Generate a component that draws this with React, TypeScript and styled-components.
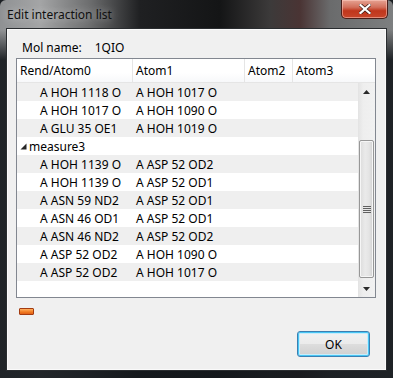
import React from "react";
import styled, { createGlobalStyle } from "styled-components";

const Global = createGlobalStyle`
  html, body { margin: 0; padding: 0; }
  body { width: 393px; height: 378px; overflow: hidden; background: #1b1f23; }
`;

const FONT = `"Segoe UI", "Noto Sans", "Open Sans", sans-serif`;

const Frame = styled.div`
  width: 393px;
  height: 378px;
  box-sizing: border-box;
  display: flex;
  flex-direction: column;
  padding: 0 6px 7px 6px;
  background:
    linear-gradient(180deg, rgba(0,0,0,0) 0px, rgba(0,0,0,0) 30px, rgba(20,24,28,0.9) 60px),
    linear-gradient(90deg, #8f9193 0px, #a4a5a6 40px, #6c6d6e 90px, #1f2022 140px, #141516 220px, #3c3a3a 270px, #4a3434 300px, #6a6b6c 330px, #7d7f80 393px);
  border-radius: 6px 6px 0 0;
`;

const TitleBar = styled.div`
  height: 28px;
  display: flex;
  align-items: flex-start;
  justify-content: space-between;
`;

const Title = styled.div`
  font-family: ${FONT};
  font-size: 12px;
  color: #101010;
  padding: 6px 0 0 1px;
  text-shadow: 0 0 8px rgba(255,255,255,0.6);
`;

const CloseButton = styled.div`
  width: 47px;
  height: 19px;
  margin-right: -1px;
  box-sizing: border-box;
  border: 1px solid #4b1f1a;
  border-top: none;
  border-radius: 0 0 5px 5px;
  background: linear-gradient(180deg, #e6a393 0%, #d2705c 40%, #c0361c 60%, #c8452a 100%);
  box-shadow: inset 0 0 0 1px rgba(255,210,200,0.5);
  display: flex;
  align-items: center;
  justify-content: center;
`;

const Client = styled.div`
  flex: 1;
  box-sizing: border-box;
  border: 1px solid #2a2d30;
  box-shadow: inset 0 0 0 1px #fafafa;
  background: #f0f0f0;
  display: flex;
  flex-direction: column;
  padding: 8px 9px 0 9px;
  font-family: ${FONT};
  font-size: 12px;
  color: #000;
`;

const MolRow = styled.div`
  display: flex;
  gap: 13px;
  height: 20px;
  align-items: center;
  padding-left: 6px;
`;

const ListBox = styled.div`
  margin-top: 1px;
  width: 360px;
  height: 240px;
  box-sizing: border-box;
  border: 1px solid #828790;
  background: #fff;
  display: flex;
  flex-direction: column;
`;

const COLS = "116px 112px 48px 1fr";

const Header = styled.div`
  height: 24px;
  box-sizing: border-box;
  display: grid;
  grid-template-columns: ${COLS};
  border-bottom: 1px solid #e5e5e5;
  background: linear-gradient(180deg, #ffffff 0%, #ffffff 60%, #f7f8fa 100%);
`;

const HeadCell = styled.div<{ $last?: boolean }>`
  display: flex;
  align-items: center;
  padding-left: 3px;
  border-right: ${(p) => (p.$last ? "none" : "1px solid #e5e5e5")};
  color: #000;
`;

const Body = styled.div`
  flex: 1;
  display: flex;
  min-height: 0;
`;

const Rows = styled.div`
  flex: 1;
  display: flex;
  flex-direction: column;
`;

const Row = styled.div<{ $alt: boolean }>`
  height: 18px;
  display: grid;
  grid-template-columns: ${COLS};
  align-items: center;
  background: ${(p) => (p.$alt ? "#efefef" : "#ffffff")};
`;

const Cell = styled.div<{ $indent?: number }>`
  padding-left: ${(p) => p.$indent ?? 3}px;
  white-space: nowrap;
`;

const GroupCell = styled.div`
  grid-column: 1 / span 4;
  display: flex;
  align-items: center;
  padding-left: 3px;
  gap: 2px;
`;

const ScrollBar = styled.div`
  width: 17px;
  display: flex;
  flex-direction: column;
  background: linear-gradient(90deg, #e3e3e3 0%, #eeeeee 30%, #f1f1f1 100%);
`;

const ArrowBtn = styled.div`
  height: 17px;
  display: flex;
  align-items: center;
  justify-content: center;
`;

const Track = styled.div`
  flex: 1;
  display: flex;
  flex-direction: column;
  justify-content: flex-end;
`;

const Thumb = styled.div`
  height: 138px;
  margin: 0 1px 2px 1px;
  box-sizing: border-box;
  border: 1px solid #979797;
  border-radius: 2px;
  background: linear-gradient(90deg, #dcdcdc 0%, #eaeaea 40%, #e4e4e4 70%, #d0d0d0 100%);
  box-shadow: inset 0 0 0 1px #f6f6f6;
  display: flex;
  align-items: center;
  justify-content: center;
`;

const Footer = styled.div`
  display: flex;
  flex-direction: column;
  flex: 1;
`;

const OrangeBar = styled.div`
  width: 13px;
  height: 5px;
  margin: 10px 0 0 3px;
  border: 1px solid #a33b10;
  border-radius: 1px;
  background: linear-gradient(180deg, #ffb060 0%, #f07a20 60%, #e0601a 100%);
`;

const ButtonRow = styled.div`
  display: flex;
  justify-content: flex-end;
  padding: 16px 7px 0 0;
`;

const OkButton = styled.div`
  width: 73px;
  height: 26px;
  box-sizing: border-box;
  border: 1px solid #3c7fb1;
  border-radius: 3px;
  background: linear-gradient(180deg, #f2f2f2 0%, #ebebeb 48%, #dddddd 52%, #cfcfcf 100%);
  box-shadow: inset 0 0 0 1px #48c6f4, inset 0 0 0 2px #c8ecfb;
  display: flex;
  align-items: center;
  justify-content: center;
  font-size: 12px;
`;

type R = { kind: "item"; a0: string; a1: string } | { kind: "group"; name: string };

const rows: R[] = [
  { kind: "item", a0: "A HOH 1118 O", a1: "A HOH 1017 O" },
  { kind: "item", a0: "A HOH 1017 O", a1: "A HOH 1090 O" },
  { kind: "item", a0: "A GLU 35 OE1", a1: "A HOH 1019 O" },
  { kind: "group", name: "measure3" },
  { kind: "item", a0: "A HOH 1139 O", a1: "A ASP 52 OD2" },
  { kind: "item", a0: "A HOH 1139 O", a1: "A ASP 52 OD1" },
  { kind: "item", a0: "A ASN 59 ND2", a1: "A ASP 52 OD1" },
  { kind: "item", a0: "A ASN 46 OD1", a1: "A ASP 52 OD1" },
  { kind: "item", a0: "A ASN 46 ND2", a1: "A ASP 52 OD2" },
  { kind: "item", a0: "A ASP 52 OD2", a1: "A HOH 1090 O" },
  { kind: "item", a0: "A ASP 52 OD2", a1: "A HOH 1017 O" },
];

export default function App() {
  return (
    <>
      <Global />
      <Frame>
        <TitleBar>
          <Title>Edit interaction list</Title>
          <CloseButton>
            <svg width="12" height="10" viewBox="0 0 12 10">
              <path d="M1.5 1 L10.5 9 M10.5 1 L1.5 9" stroke="#3a1a14" strokeWidth="3.6" strokeLinecap="square" />
              <path d="M1.5 1 L10.5 9 M10.5 1 L1.5 9" stroke="#ffffff" strokeWidth="2.2" strokeLinecap="square" />
            </svg>
          </CloseButton>
        </TitleBar>
        <Client>
          <MolRow>
            <span>Mol name:</span>
            <span>1QIO</span>
          </MolRow>
          <ListBox>
            <Header>
              <HeadCell>Rend/Atom0</HeadCell>
              <HeadCell>Atom1</HeadCell>
              <HeadCell>Atom2</HeadCell>
              <HeadCell $last>Atom3</HeadCell>
            </Header>
            <Body>
              <Rows>
                {rows.map((r, i) =>
                  r.kind === "group" ? (
                    <Row key={i} $alt={i % 2 === 0}>
                      <GroupCell>
                        <svg width="7" height="7" viewBox="0 0 7 7">
                          <path d="M6.5 0.5 L6.5 6.5 L0.5 6.5 Z" fill="#262626" />
                        </svg>
                        <span>{r.name}</span>
                      </GroupCell>
                    </Row>
                  ) : (
                    <Row key={i} $alt={i % 2 === 0}>
                      <Cell $indent={23}>{r.a0}</Cell>
                      <Cell>{r.a1}</Cell>
                      <Cell />
                      <Cell />
                    </Row>
                  )
                )}
              </Rows>
              <ScrollBar>
                <ArrowBtn>
                  <svg width="7" height="4" viewBox="0 0 7 4">
                    <path d="M0 4 L3.5 0 L7 4 Z" fill="#2a2a2a" />
                  </svg>
                </ArrowBtn>
                <Track>
                  <Thumb>
                    <svg width="8" height="8" viewBox="0 0 8 8">
                      <path d="M0 1.5 H8 M0 3.5 H8 M0 5.5 H8 M0 7.5 H8" stroke="#606060" strokeWidth="1" />
                    </svg>
                  </Thumb>
                </Track>
                <ArrowBtn>
                  <svg width="7" height="4" viewBox="0 0 7 4">
                    <path d="M0 0 L3.5 4 L7 0 Z" fill="#2a2a2a" />
                  </svg>
                </ArrowBtn>
              </ScrollBar>
            </Body>
          </ListBox>
          <Footer>
            <OrangeBar />
            <ButtonRow>
              <OkButton>OK</OkButton>
            </ButtonRow>
          </Footer>
        </Client>
      </Frame>
    </>
  );
}
